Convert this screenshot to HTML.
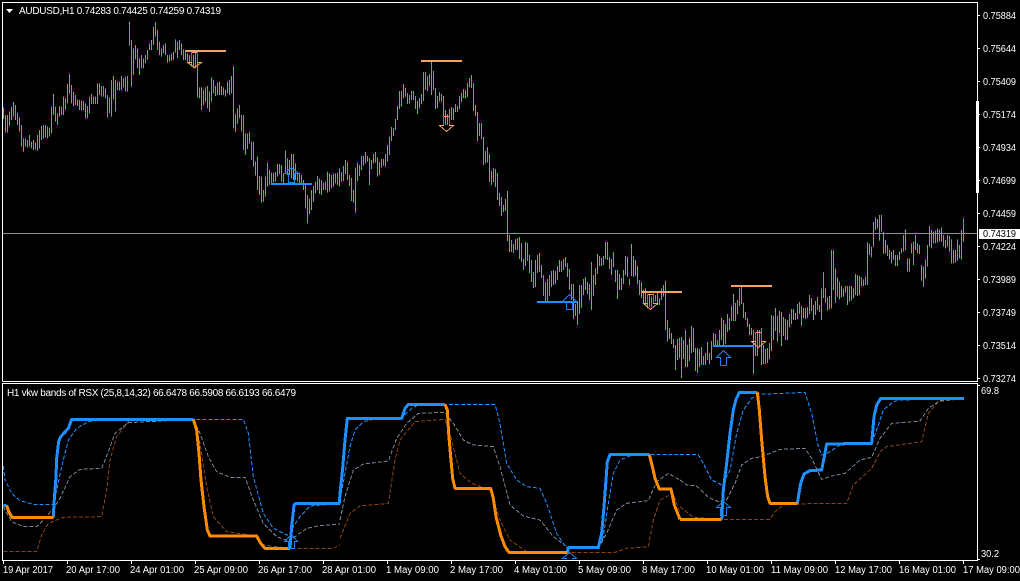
<!DOCTYPE html>
<html><head><meta charset="utf-8"><title>AUDUSD,H1</title>
<style>
html,body{margin:0;padding:0;background:#000;}
svg{display:block;position:absolute;left:0;top:0;}
text{font-family:"Liberation Sans",sans-serif;font-size:10px;fill:#fff;}
</style></head><body>
<svg width="1020" height="581" viewBox="0 0 1020 581" xmlns="http://www.w3.org/2000/svg">
<rect width="1020" height="581" fill="#000"/>
<g fill="none" stroke="#22e022" stroke-width="1" shape-rendering="crispEdges">
<g transform="scale(1,.33333)">
<path d="M3.5 322V357M5.5 345V398M7.5 345V398M9.5 335V378M11.5 320V360M13.5 306V350M15.5 315V360M17.5 338V375M19.5 352V395M21.5 375V440M23.5 415V455M25.5 415V440M27.5 420V443M29.5 405V440M31.5 425V445M33.5 420V450M35.5 428V448M37.5 405V452M39.5 390V445M41.5 378V420M43.5 375V415M45.5 375V412M47.5 380V415M49.5 383V410M51.5 320V400M53.5 282V345M55.5 320V365M57.5 340V375M59.5 318V350M61.5 320V345M63.5 290V345M65.5 295V330M67.5 252V310M69.5 222V280M71.5 255V310M73.5 275V318M75.5 285V315M77.5 298V318M79.5 300V330M81.5 302V332M83.5 303V330M85.5 310V355M87.5 318V355M89.5 290V340M91.5 282V312M93.5 290V312M95.5 290V312M97.5 250V312M99.5 250V285M101.5 258V290M103.5 258V290M105.5 265V295M107.5 285V353M109.5 292V340M111.5 240V350M113.5 228V298M115.5 240V335M117.5 245V270M119.5 245V272M121.5 228V270M123.5 235V262M125.5 230V275M127.5 228V275M129.5 65V137M131.5 120V260M133.5 145V225M135.5 135V178M137.5 145V205M139.5 175V225M141.5 165V205M143.5 175V205M145.5 165V190M147.5 150V180M149.5 130V150M151.5 120V150M153.5 80V135M155.5 67V110M157.5 90V150M159.5 125V165M161.5 145V170M163.5 135V160M165.5 130V165M167.5 165V188M169.5 165V185M171.5 160V182M173.5 155V180M175.5 118V158M177.5 125V175M179.5 120V150M181.5 130V165M183.5 148V180M185.5 150V180M187.5 160V185M189.5 165V190M191.5 155V200M193.5 165V205M195.5 150V205M197.5 185V292M199.5 262V295M201.5 262V330M203.5 270V315M205.5 262V305M207.5 258V325M209.5 275V335M211.5 232V305M213.5 240V280M215.5 258V288M217.5 248V285M219.5 245V285M221.5 258V285M223.5 262V285M225.5 270V290M227.5 245V280M229.5 240V285M231.5 228V280M233.5 198V385M235.5 342V395M237.5 325V372M239.5 315V355M241.5 345V395M243.5 345V450M245.5 400V465M247.5 400V447M249.5 395V430M251.5 425V480M253.5 425V500M255.5 485V527M257.5 470V570M259.5 528V585M261.5 530V608M263.5 570V605M265.5 530V590M267.5 488V560M269.5 510V555M271.5 518V550M273.5 518V548M275.5 516V545M277.5 492V530M279.5 492V522M281.5 495V545M283.5 520V555M285.5 452V520M287.5 475V525M289.5 480V525M291.5 462V535M293.5 462V540M295.5 490V540M297.5 515V545M299.5 518V555M301.5 525V555M303.5 540V570M305.5 555V625M307.5 585V670M309.5 595V642M311.5 570V630M313.5 558V605M315.5 545V580M317.5 528V570M319.5 535V582M321.5 540V585M323.5 548V570M325.5 545V570M327.5 515V578M329.5 520V575M331.5 525V565M333.5 520V560M335.5 520V550M337.5 518V555M339.5 505V560M341.5 516V545M343.5 498V543M345.5 480V522M347.5 486V540M349.5 525V558M351.5 533V603M353.5 570V608M355.5 503V638M357.5 487V543M359.5 495V528M361.5 468V510M363.5 468V497M365.5 456V490M367.5 468V485M369.5 474V555M371.5 480V507M373.5 462V490M375.5 456V488M377.5 472V530M379.5 486V525M381.5 477V502M383.5 477V497M385.5 462V500M387.5 435V485M389.5 410V465M391.5 381V423M393.5 384V408M395.5 357V390M397.5 318V360M399.5 273V327M401.5 273V320M403.5 252V295M405.5 264V290M407.5 279V312M409.5 285V310M411.5 273V300M413.5 273V300M415.5 288V327M417.5 303V342M419.5 294V325M421.5 282V312M423.5 216V303M425.5 216V270M427.5 228V273M429.5 222V258M431.5 185V285M433.5 213V270M435.5 264V327M437.5 288V324M439.5 276V305M441.5 282V305M443.5 288V375M445.5 330V375M447.5 342V375M449.5 327V375M451.5 321V360M453.5 324V360M455.5 312V336M457.5 318V336M459.5 288V327M461.5 279V306M463.5 267V294M465.5 270V296M467.5 249V291M469.5 234V262M471.5 225V264M473.5 249V333M475.5 315V348M477.5 336V423M479.5 369V408M481.5 369V417M483.5 411V495M485.5 453V490M487.5 441V488M489.5 462V546M491.5 513V555M493.5 504V546M495.5 507V561M497.5 519V600M499.5 579V618M501.5 591V648M503.5 615V636M505.5 597V633M507.5 573V723"/>
</g>
<g transform="translate(0,220) scale(1,.33333)">
<path d="M509.5 45V96M511.5 60V96M513.5 72V99M515.5 57V90M517.5 54V90M519.5 51V117M521.5 69V126M523.5 117V150M525.5 66V138M527.5 69V123M529.5 105V159M531.5 120V186M533.5 156V204M535.5 120V201M537.5 105V159M539.5 99V156M541.5 135V174M543.5 165V228M545.5 186V243M547.5 177V243M549.5 165V228M551.5 153V201M553.5 150V195M555.5 153V192M557.5 138V180M559.5 120V156M561.5 123V156M563.5 117V150M565.5 111V141M567.5 129V171M569.5 147V210M571.5 192V240M573.5 192V297M575.5 252V288M577.5 249V315M579.5 195V282M581.5 195V264M583.5 177V225M585.5 171V210M587.5 186V222M589.5 192V240M591.5 126V270M593.5 165V228M595.5 144V195M597.5 102V162M599.5 108V138M601.5 114V138M603.5 108V135M605.5 66V117M607.5 66V120M609.5 111V147M611.5 117V165M613.5 96V141M615.5 150V186M617.5 150V237M619.5 162V210M621.5 174V210M623.5 150V192M625.5 108V165M627.5 111V171M629.5 177V195M631.5 72V168M633.5 108V171M635.5 120V168M637.5 138V192M639.5 180V225M641.5 186V234M643.5 210V250M645.5 205V255M647.5 225V265M649.5 222V260M651.5 230V262M653.5 220V240M655.5 225V245M657.5 215V255M659.5 235V255M661.5 205V240M663.5 195V230M665.5 183V330M667.5 300V365M669.5 324V357M671.5 339V372M673.5 357V384M675.5 375V450M677.5 357V420M679.5 354V414M681.5 351V474M683.5 360V417M685.5 330V441M687.5 375V441M689.5 354V423M691.5 318V399M693.5 324V396M695.5 384V453M697.5 384V459M699.5 387V441M701.5 381V435M703.5 408V435M705.5 399V435M707.5 366V420M709.5 399V432M711.5 363V420M713.5 339V378M715.5 342V378M717.5 360V378M719.5 330V375M721.5 294V360M723.5 300V375M725.5 312V372M727.5 282V336M729.5 294V330M731.5 258V303M733.5 222V303M735.5 249V303M737.5 240V282M739.5 204V258M741.5 200V252M743.5 249V294M745.5 276V300M747.5 294V321M749.5 312V345M751.5 324V345M753.5 330V462M755.5 345V408M757.5 330V408M759.5 330V380M761.5 324V435M763.5 375V432M765.5 387V432M767.5 384V429M769.5 369V417M771.5 285V393M773.5 288V360M775.5 264V333M777.5 288V366M779.5 273V339M781.5 276V378M783.5 291V348M785.5 297V360M787.5 300V360M789.5 282V321M791.5 267V312M793.5 267V300M795.5 279V300M797.5 252V297M799.5 246V282M801.5 258V318M803.5 264V294M805.5 264V297M807.5 261V294M809.5 225V282M811.5 234V273M813.5 255V300M815.5 243V285M817.5 231V270M819.5 255V276"/>
</g>
<g transform="translate(0,200) scale(1,.33333)">
<path d="M821.5 265V360M823.5 216V294M825.5 265V308M827.5 292V332M829.5 288V328M831.5 150V325M833.5 150V270M835.5 205V308M837.5 232V290M839.5 245V298M841.5 258V292M843.5 265V290M845.5 258V278M847.5 258V315M849.5 258V305M851.5 258V302M853.5 265V295M855.5 222V285M857.5 225V288M859.5 228V285M861.5 232V258M863.5 238V258M865.5 230V255M867.5 127V255M869.5 132V165M871.5 140V172M873.5 66V140M875.5 52V90M877.5 57V85M879.5 45V122M881.5 45V95M883.5 95V162M885.5 120V160M887.5 135V168M889.5 150V178M891.5 155V190M893.5 150V180M895.5 165V198M897.5 165V198M899.5 155V180M901.5 145V160M903.5 105V155M905.5 88V150M907.5 175V215M909.5 175V215M911.5 130V160M913.5 125V195M915.5 105V150M917.5 130V160M919.5 135V162M921.5 195V242M923.5 200V260M925.5 178V236M927.5 135V200M929.5 78V140M931.5 90V145M933.5 95V130M935.5 92V130M937.5 85V128M939.5 88V125M941.5 82V125M943.5 105V140M945.5 120V145M947.5 105V140M949.5 108V155M951.5 118V190M953.5 150V190M955.5 150V188M957.5 118V182M959.5 135V175M961.5 90V178M963.5 55V125"/>
</g>
</g>
<rect x="3" y="233" width="974" height="1" fill="#8a8f99"/>
<g shape-rendering="crispEdges">
<rect x="186" y="50" width="40" height="2" fill="#f4a460"/>
<rect x="421" y="60" width="41" height="2" fill="#f4a460"/>
<rect x="641" y="291" width="41" height="2" fill="#f4a460"/>
<rect x="731" y="285" width="41" height="2" fill="#f4a460"/>
<rect x="271" y="183" width="41" height="2" fill="#1e90ff"/>
<rect x="537" y="301" width="41" height="2" fill="#1e90ff"/>
<rect x="713" y="345" width="41" height="2" fill="#1e90ff"/>
</g>
<g fill="none" stroke-width="1" shape-rendering="crispEdges">
<g stroke="#f4a460">
<path d="M191.5 52.5H197.5V62.5H201.5L194.5 67.5L187.5 62.5H191.5Z"/>
<path d="M443.5 116.5H449.5V125.5H453.5L446.5 131.5L439.5 125.5H443.5Z"/>
<path d="M647.5 294.5H653.5V303.5H657.5L650.5 309.5L643.5 303.5H647.5Z"/>
<path d="M755.5 332.5H761.5V341.5H765.5L758.5 347.5L751.5 341.5H755.5Z"/>
<path d="M191.5 401.5H197.5V409.5H201.5L194.5 416.5L187.5 409.5H191.5Z"/>
<path d="M647.5 436.5H653.5V445.5H657.5L650.5 451.5L643.5 445.5H647.5Z"/>
</g>
<path stroke="#b8623a" d="M191.5 52V62M197.5 52V62M443.5 116V125M449.5 116V125M647.5 294V303M653.5 294V303M755.5 332V341M761.5 332V341M191.5 401V409M197.5 401V409M647.5 436V445M653.5 436V445"/>
<g stroke="#1e80e8">
<path d="M288.5 182.5H294.5V173.5H298.5L291.5 167.5L284.5 173.5H288.5Z"/>
<path d="M566.5 309.5H572.5V301.5H576.5L569.5 294.5L562.5 301.5H566.5Z"/>
<path d="M720.5 365.5H726.5V357.5H730.5L723.5 350.5L716.5 357.5H720.5Z"/>
</g>
</g>
<rect x="3" y="384" width="974" height="176" fill="#000"/>
<!-- indicator dashed + thick lines (coordinates in 3x units) -->
<g transform="translate(0,380) scale(.33333)" fill="none" stroke-linejoin="round" shape-rendering="crispEdges">
<g stroke-width="3" stroke-dasharray="12 6">
<path stroke="#8b4513" d="M10 515H110L125 465L145 430L190 412L305 410L320 330L330 240L350 170L385 125L410 118H580L600 190L620 320L640 410L680 455L770 468L790 495L870 505H1000L1020 495"/>
<path stroke="#778899" d="M10 380L35 425L70 440H110L130 420L160 385L180 355L210 290L240 268L305 265L325 215L345 160L385 128L580 118L600 160L625 230L650 275L690 292H735L760 360L790 430L830 470L870 485L885 470L920 445L960 437L1020 432"/>
<path stroke="#1e90ff" d="M10 258L15 300L35 340L60 362L100 373H160L170 330L185 260L205 180L230 145L265 125L300 118H730L745 160L760 290L790 400L820 445L860 465H870L880 440L900 410L930 378L1020 370"/>
</g>
<path stroke="#1e90ff" stroke-width="9" d="M10 376H20M160 412L162 370L168 290L170 235L176 185L182 170L205 145L215 118H580M870 505L875 440L882 375L888 370H1020"/>
<path stroke="#ff8c00" stroke-width="9" d="M20 376L25 392L36 412H160M580 118L590 150L597 220L603 300L612 380L622 450L630 468H770L782 490L795 505H870"/>
</g>
<g transform="translate(340,380) scale(.33333)" fill="none" stroke-linejoin="round" shape-rendering="crispEdges">
<g stroke-width="3" stroke-dasharray="12 6">
<path stroke="#8b4513" d="M0 475L30 400L60 378L145 370L165 240L180 180L225 125L315 118L335 180L360 280L395 310L450 330L480 420L510 480L560 515L680 517H825L860 505L925 500L940 420L960 360L1000 340L1020 400"/>
<path stroke="#778899" d="M0 420L15 350L40 270L70 252L145 243L170 175L200 130L235 100L315 97L340 130L370 180L400 195L460 200L480 260L510 375L550 408L600 420L640 470L680 500L775 505L800 460L830 390L860 370L925 362L950 305L985 280L1020 300"/>
<path stroke="#1e90ff" d="M0 360L15 280L30 200L45 150L70 125L100 118L185 112L215 85L240 73H465L480 130L500 250L530 300L560 320L600 325L620 370L650 460L680 505H775L790 470L805 370L820 280L840 240L880 224H1020"/>
</g>
<path stroke="#1e90ff" stroke-width="9" d="M-2 370L0 340L8 265L15 180L22 115H185L195 85L205 73H315M682 517L685 503H775L785 460L792 380L798 300L802 245L810 224H928"/>
<path stroke="#ff8c00" stroke-width="9" d="M315 73L322 90L326 160L332 230L338 295L345 325H452L460 355L468 410L482 465L495 500L507 517H682M928 224L936 255L945 295L958 327H993L1003 375L1020 418"/>
</g>
<g transform="translate(680,380) scale(.33333)" fill="none" stroke-linejoin="round" shape-rendering="crispEdges">
<g stroke-width="3" stroke-dasharray="12 6">
<path stroke="#8b4513" d="M0 380L40 412L125 418H270L285 395L315 372L500 370L520 315L575 265L600 215L620 200L725 185L745 100L775 65L852 55"/>
<path stroke="#778899" d="M0 300L20 315L50 318L85 352L115 365L140 360L165 310L185 255L215 235L245 230L300 208L375 205L395 235L425 298L455 288L495 280L540 240L575 232L600 175L635 130L720 123L745 85L780 62L852 55"/>
<path stroke="#1e90ff" d="M0 224H55L75 260L95 300L125 315L135 300L150 270L170 160L190 90L215 55L240 43L375 37L395 100L415 200L425 225L445 218L480 195L575 190L590 150L610 90L640 65L660 60L852 55"/>
</g>
<path stroke="#1e90ff" stroke-width="9" d="M125 418L130 330L140 250L150 160L160 90L168 58L178 37H232M352 370L362 310L372 282L390 272L425 270L432 235L440 192L575 190L582 110L590 75L602 55H852"/>
<path stroke="#ff8c00" stroke-width="9" d="M0 418H125M232 37L238 90L245 180L255 290L263 350L270 370H352"/>
</g>
<g fill="none" stroke-width="1" shape-rendering="crispEdges" stroke="#1e80e8">
<path d="M288.5 548.5H294.5V541.5H297.5L291.5 534.5L284.5 541.5H288.5Z"/>
<path d="M720.5 515.5H726.5V507.5H730.5L723.5 501.5L716.5 507.5H720.5Z"/>
<path d="M566.5 559.5V558.5H562.5L569.5 552.5L576.5 558.5H572.5V559.5"/>
</g>
<!-- frames -->
<g fill="none" stroke="#fff" stroke-width="1" shape-rendering="crispEdges">
<path d="M2.5 381.5V2.5H977.5V381.5H2.5"/>
<path d="M2.5 383.5H977.5V560.5H2.5Z"/>
<path d="M978 15.5h2M978 48.5h2M978 81.5h2M978 114.5h2M978 147.5h2M978 180.5h2M978 213.5h2M978 246.5h2M978 279.5h2M978 312.5h2M978 345.5h2M978 378.5h2M978 385.5h2M978 559.5h2"/>
<path d="M3.5 561V564M67.5 561V564M131.5 561V564M195.5 561V564M259.5 561V564M323.5 561V564M387.5 561V564M451.5 561V564M515.5 561V564M579.5 561V564M643.5 561V564M707.5 561V564M771.5 561V564M835.5 561V564M899.5 561V564M963.5 561V564"/>
</g>
<rect x="976" y="101" width="3" height="92" fill="#fff"/>
<path d="M6 9H13L9.5 13Z" fill="#fff"/>
<rect x="979" y="229" width="41" height="10" fill="#fff"/>
<text x="19" y="14" textLength="202" lengthAdjust="spacing">AUDUSD,H1  0.74283 0.74425 0.74259 0.74319</text>
<text x="7" y="396" textLength="289" lengthAdjust="spacing">H1 vkw bands of RSX (25,8,14,32) 66.6478 66.5908 66.6193 66.6479</text>
<g>
<text x="983" y="19" textLength="33" lengthAdjust="spacingAndGlyphs">0.75884</text>
<text x="983" y="52" textLength="33" lengthAdjust="spacingAndGlyphs">0.75644</text>
<text x="983" y="85" textLength="33" lengthAdjust="spacingAndGlyphs">0.75409</text>
<text x="983" y="118" textLength="33" lengthAdjust="spacingAndGlyphs">0.75174</text>
<text x="983" y="151" textLength="33" lengthAdjust="spacingAndGlyphs">0.74934</text>
<text x="983" y="184" textLength="33" lengthAdjust="spacingAndGlyphs">0.74699</text>
<text x="983" y="217" textLength="33" lengthAdjust="spacingAndGlyphs">0.74459</text>
<text x="983" y="237" textLength="33" lengthAdjust="spacingAndGlyphs" style="fill:#000">0.74319</text>
<text x="983" y="250" textLength="33" lengthAdjust="spacingAndGlyphs">0.74224</text>
<text x="983" y="283" textLength="33" lengthAdjust="spacingAndGlyphs">0.73989</text>
<text x="983" y="316" textLength="33" lengthAdjust="spacingAndGlyphs">0.73749</text>
<text x="983" y="349" textLength="33" lengthAdjust="spacingAndGlyphs">0.73514</text>
<text x="983" y="382" textLength="33" lengthAdjust="spacingAndGlyphs">0.73274</text>
<text x="981" y="394" textLength="18" lengthAdjust="spacingAndGlyphs">69.8</text>
<text x="981" y="557" textLength="18" lengthAdjust="spacingAndGlyphs">30.2</text>
</g>
<g>
<text x="3" y="573" textLength="50" lengthAdjust="spacingAndGlyphs">19 Apr 2017</text>
<text x="66" y="573" textLength="54" lengthAdjust="spacingAndGlyphs">20 Apr 17:00</text>
<text x="130" y="573" textLength="54" lengthAdjust="spacingAndGlyphs">24 Apr 01:00</text>
<text x="194" y="573" textLength="54" lengthAdjust="spacingAndGlyphs">25 Apr 09:00</text>
<text x="258" y="573" textLength="54" lengthAdjust="spacingAndGlyphs">26 Apr 17:00</text>
<text x="322" y="573" textLength="54" lengthAdjust="spacingAndGlyphs">28 Apr 01:00</text>
<text x="386" y="573" textLength="53" lengthAdjust="spacingAndGlyphs">1 May 09:00</text>
<text x="450" y="573" textLength="53" lengthAdjust="spacingAndGlyphs">2 May 17:00</text>
<text x="514" y="573" textLength="53" lengthAdjust="spacingAndGlyphs">4 May 01:00</text>
<text x="578" y="573" textLength="53" lengthAdjust="spacingAndGlyphs">5 May 09:00</text>
<text x="642" y="573" textLength="53" lengthAdjust="spacingAndGlyphs">8 May 17:00</text>
<text x="706" y="573" textLength="58" lengthAdjust="spacingAndGlyphs">10 May 01:00</text>
<text x="771" y="573" textLength="57" lengthAdjust="spacingAndGlyphs">11 May 09:00</text>
<text x="835" y="573" textLength="57" lengthAdjust="spacingAndGlyphs">12 May 17:00</text>
<text x="899" y="573" textLength="57" lengthAdjust="spacingAndGlyphs">16 May 01:00</text>
<text x="963" y="573" textLength="57" lengthAdjust="spacingAndGlyphs">17 May 09:00</text>
</g>
</svg>
</body></html>
